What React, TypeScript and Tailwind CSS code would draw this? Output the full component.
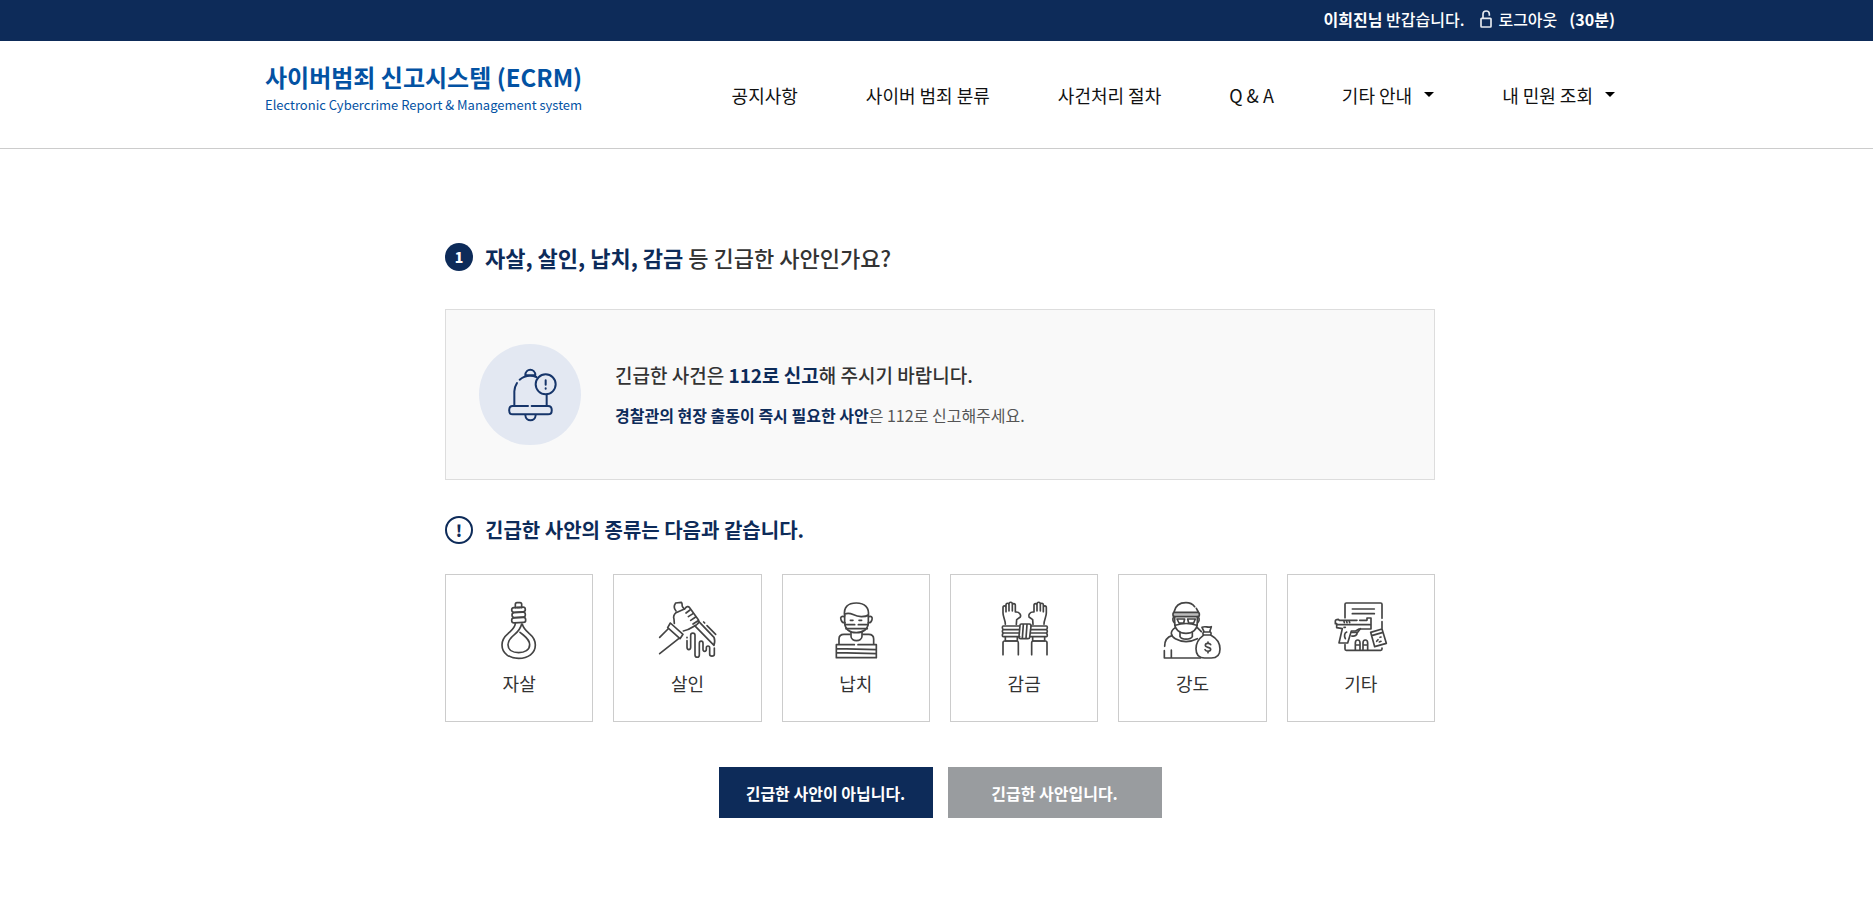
import type { ReactNode } from "react";

function LineIcon({ children }: { children: ReactNode }) {
  return (
    <svg
      viewBox="0 0 180 180"
      className="h-[60px] w-[60px]"
      fill="none"
      stroke="#444444"
      strokeWidth="5"
      strokeLinecap="round"
      strokeLinejoin="round"
      aria-hidden="true"
    >
      {children}
    </svg>
  );
}

function NooseIcon() {
  return (
    <LineIcon>
      <path d="M79 20V10q0-5 5-5h9q5 0 5 5v10" />
      <path d="M84 20h9" />
      <rect x="68" y="19" width="41" height="14" rx="7" transform="rotate(-3 88 26)" />
      <rect x="69" y="34" width="40" height="15" rx="7" transform="rotate(-3 88 41)" />
      <rect x="68" y="50" width="42" height="15" rx="7" transform="rotate(-3 88 57)" />
      <path d="M79 68c-2 14-10 19-22 30-12 10-18 20-18 34 0 25 22 40 50 40s50-15 50-40c0-14-6-24-18-34-9-8-17-14-21-28" />
      <path d="M98 69c-4 16-10 22-21 31-14 11-20 19-20 31 0 16 14 24 32 24s33-8 33-24c0-12-8-20-19-29l-10-8" />
    </LineIcon>
  );
}

function KnifeIcon() {
  return (
    <LineIcon>
      <path d="M57 30c-7-8-6-17-1-24l17-2c5 5 0 9 4 14l5 6" />
      <path d="M52 67l-1-12c-3-9-1-14 6-20l27-12c4-7 10-8 14-3l26 36c3 6 1 11-5 15-14 7-20 16-40 19" />
      <path d="M87 36l12-9M94 47l14-9M101 58l15-10M108 69l14-9" />
      <path d="M40 66l38 34-9 13-37-33z" />
      <path d="M33 84L8 109M66 112L8 158" />
      <path d="M113 74l58 59c3-10 3-17 0-24l-46-48" />
      <path d="M140 63l3 3M150 74l26 26" />
      <path d="M90 109v1M90 119v20c0 9 11 9 11 0v-36c0-9 13-9 13 0v59c0 9 13 9 13 0v-35c0-9 11-9 11 0v18c0 8 10 8 10 0v-4c0-8 10-8 10 0v19c0 7 14 7 14 0v-19" />
    </LineIcon>
  );
}

function HostageIcon() {
  return (
    <LineIcon>
      <path d="M56 44C52 18 66 6 91 6s40 14 36 40" />
      <path d="M56 39c22-9 24 9 51 8 8 0 15-1 20-5" />
      <path d="M56 42v22c0 20 14 31 35 31s36-11 36-31V44" />
      <path d="M55 47c-8-3-13 2-10 9 2 7 6 10 12 9M128 47c8-3 12 2 10 9-2 7-6 10-11 9" />
      <path d="M73 58h8M99 58h8" />
      <path d="M58 71h28M97 71h29M60 83h64" />
      <path d="M75 92v14c0 17 33 17 33 0V92" />
      <path d="M39 128v-14c0-10 7-14 15-14h18M111 100h17c9 0 15 5 15 14v14" />
      <path d="M85 131H31v39h120v-39H96M31 143l120 3M31 155l120 3" />
    </LineIcon>
  );
}

function BoundHandsIcon() {
  return (
    <LineIcon>
      <path d="M34 70c0-14-7-22-7-34V20c0-7 9-7 9 0v12-20c0-7 9-7 9 0v18V9c0-7 10-7 10 0v21V13c0-7 9-7 9 0v20l3 0c9 0 15 9 12 15l-11 8-1 14" />
      <path d="M150 70c0-14 7-22 7-34V20c0-7-9-7-9 0v12-20c0-7-9-7-9 0v18V9c0-7-10-7-10 0v21V13c0-7-9-7-9 0v20l-3 0c-9 0-15 9-12 15l11 8 1 14" />
      <path d="M76 75H28c-4 0-4 9 0 11-4 2-4 8 0 10-4 3-4 11 0 11h49M28 86h48M28 96h48" />
      <path d="M110 75h47c4 0 4 9 0 11 4 2 4 8 0 10 4 3 4 11 0 11h-47M110 86h47M110 96h47" />
      <path d="M82 69h24c4 0 6 3 5 7l-4 33c0 3-2 4-5 4H80c-4 0-6-3-5-7l3-33c0-3 1-4 4-4zM88 70l-3 42M99 70l-3 42" />
      <path d="M34 108v12h36v-12M116 108v12h36v-12" />
      <path d="M27 161v-36q0-5 5-5h37q4 0 4 5v36M113 161v-36q0-5 5-5h36q5 0 5 5v36" />
    </LineIcon>
  );
}

function RobberIcon() {
  return (
    <LineIcon>
      <path d="M36 33C40 14 53 5 72 5c11 0 20 4 26 12M103 22l6 11" />
      <rect x="33" y="34" width="79" height="13" rx="5" fill="#bdbdbd" />
      <path d="M38 47v20c0 18 14 30 34 30s34-12 34-30V47" />
      <path d="M35 48c-4 5-3 15 3 18M109 48c4 5 3 15-3 18" />
      <path d="M45 54h23l-3 12H51zM77 54h23l-5 12H80zM40 73c21-7 44-7 64 0" />
      <path d="M54 95v12c5 10 31 10 37 0V95" />
      <path d="M40 80C22 92 26 105 40 113c20 11 44 11 66 0M106 80l12 12" />
      <path d="M30 104C15 108 8 118 8 136M7 149v22h108M28 147v23" />
      <path d="M126 92l-6-13c10-5 16 2 28-2l-5 15M125 93h20c3 2 3 7 0 9h-20c-3-2-3-7 0-9z" />
      <path d="M124 103c-15 11-22 25-22 40 0 19 10 28 26 28h20c16 0 26-9 26-27 0-16-9-31-27-41" />
      <path d="M146 131c-3-6-16-5-16 2 0 8 16 4 16 12 0 7-13 8-17 1M138 123v4M138 150v5" />
    </LineIcon>
  );
}

function EvidenceIcon() {
  return (
    <LineIcon>
      <path d="M42 50V10q0-4 4-4h103q4 0 4 4v42M153 62v20M153 141v3q0 4-4 4H46q-4 0-4-4v-13" />
      <path d="M64 24h66M64 38h66" />
      <path d="M25 58h53M86 58h22v-7h12v33H84L74 90H61l-11 36H24l10-43-17-3V68h-4v-8c0-4 4-5 9-5l3 3M20 71h96" />
      <path d="M39 79h4M47 93c-7 3-8 12-4 20M39 61l1 4M47 61l1 4M55 61l1 4" />
      <path d="M62 94l18 0 8-11M62 105c10 2 16-2 17-11" />
      <path d="M73 147v-21c0-12 14-12 14 0v21M96 147v-21c0-12 14-12 14 0v21M73 132h14M96 132h14" />
      <path d="M119 94l34-10 13 43-35 10zM122 104l34-10M137 121l4-5M145 123l5-2M147 109l3-1" />
    </LineIcon>
  );
}

function BellIcon() {
  return (
    <svg
      viewBox="75 73 180 180"
      className="h-[60px] w-[60px]"
      fill="none"
      stroke="#16356a"
      strokeWidth="6"
      strokeLinecap="round"
      strokeLinejoin="round"
      aria-hidden="true"
    >
      <path d="M151 104c0-22 30-22 30 0zM118 194v-42c0-9 3-17 8-25M134 117c9-8 19-12 31-12 7 0 13 1 19 4M215 164v30" />
      <path d="M159 196h-46c-14 0-14 25 0 25h106c15 0 15-25 0-25h-49" />
      <path d="M151 223c1 21 30 21 31 0" />
      <circle cx="212" cy="131" r="30" />
      <path d="M212 119v13M212 143v1" />
    </svg>
  );
}

function LockIcon() {
  return (
    <svg
      viewBox="0 0 36 54"
      className="h-[18px] w-3"
      fill="none"
      stroke="#e6eaf0"
      strokeWidth="5"
      aria-hidden="true"
    >
      <rect x="3" y="25" width="30" height="26" rx="2" />
      <path d="M9 25V12c0-12 19-12 19 0v5" />
    </svg>
  );
}

function Caret() {
  return (
    <svg viewBox="0 0 10 5" className="h-[5px] w-[10px]" aria-hidden="true">
      <path d="M0 0h10L5 5z" fill="#000000" />
    </svg>
  );
}

const navItems = [
  { label: "공지사항" },
  { label: "사이버 범죄 분류" },
  { label: "사건처리 절차" },
  { label: "Q & A" },
  { label: "기타 안내", menu: true },
  { label: "내 민원 조회", menu: true },
];

const urgentTypes = [
  { label: "자살", icon: <NooseIcon /> },
  { label: "살인", icon: <KnifeIcon /> },
  { label: "납치", icon: <HostageIcon /> },
  { label: "감금", icon: <BoundHandsIcon /> },
  { label: "강도", icon: <RobberIcon /> },
  { label: "기타", icon: <EvidenceIcon /> },
];

export default function App() {
  return (
    <div className="min-h-screen bg-white font-['Noto_Sans_CJK_KR',sans-serif] text-[#333333]">
      <div className="bg-[#0d2b59] pl-[7px] text-white">
        <div className="mx-auto flex h-[41px] max-w-[1350px] items-center justify-end pb-1 text-base leading-6 font-medium">
          <p>
            <strong className="font-bold">이희진님</strong> 반갑습니다.
          </p>
          <a href="#logout" className="ml-4 flex items-center gap-1.5">
            <LockIcon />
            로그아웃
          </a>
          <span className="ml-3 font-bold">(30분)</span>
        </div>
      </div>

      <header className="border-b border-[#cccccc] pl-[7px]">
        <div className="mx-auto flex h-[107px] max-w-[1350px] items-center justify-between">
          <a href="#home" className="pb-3 text-[#0352a3]">
            <span className="block text-2xl leading-8 font-bold">사이버범죄 신고시스템 (ECRM)</span>
            <span className="block text-[13px] leading-6">
              Electronic Cybercrime Report &amp; Management system
            </span>
          </a>
          <nav>
            <ul className="flex gap-[68px] text-lg leading-7 text-[#111111]">
              {navItems.map((item) => (
                <li key={item.label}>
                  <a href="#menu" className="flex items-center gap-3">
                    {item.label}
                    {item.menu && <Caret />}
                  </a>
                </li>
              ))}
            </ul>
          </nav>
        </div>
      </header>

      <main className="pl-[7px]">
        <div className="mx-auto max-w-[990px] pt-[90px] pb-20">
          <h1 className="flex items-center gap-3 text-[22px] leading-9 font-medium">
            <span className="flex h-7 w-7 items-center justify-center rounded-full bg-[#0d2b59] text-sm font-black text-white">
              1
            </span>
            <span>
              <strong className="font-bold text-[#0d2b59]">자살, 살인, 납치, 감금</strong> 등 긴급한 사안인가요?
            </span>
          </h1>

          <section className="mt-[34px] flex items-center gap-[34px] border border-[#dddddd] bg-[#f9f9f9] px-[33px] py-[34px]">
            <div className="flex h-[101px] w-[102px] items-center justify-center rounded-full bg-[#e3e8f2]">
              <BellIcon />
            </div>
            <div>
              <p className="text-[19px] leading-7 font-medium">
                긴급한 사건은 <strong className="font-bold text-[#0d2b59]">112로 신고</strong>해 주시기 바랍니다.
              </p>
              <p className="mt-3 text-base leading-7 text-[#555555]">
                <strong className="font-bold text-[#0d2b59]">경찰관의 현장 출동이 즉시 필요한 사안</strong>은 112로 신고해주세요.
              </p>
            </div>
          </section>

          <h2 className="mt-8 flex items-center gap-3 text-xl leading-9 font-bold text-[#0d2b59]">
            <span className="flex h-7 w-7 items-center justify-center rounded-full border-2 border-[#0d2b59] text-base font-black">
              !
            </span>
            긴급한 사안의 종류는 다음과 같습니다.
          </h2>

          <ul className="mt-[26px] grid grid-cols-6 gap-5">
            {urgentTypes.map((type) => (
              <li
                key={type.label}
                className="flex h-[148px] flex-col items-center border border-[#cccccc] pt-[26px] text-lg leading-7"
              >
                {type.icon}
                <span className="mt-2">{type.label}</span>
              </li>
            ))}
          </ul>

          <div className="mt-[45px] flex justify-center gap-[15px] text-base font-bold text-white">
            <button type="button" className="h-[51px] w-[214px] bg-[#0d2b59]">
              긴급한 사안이 아닙니다.
            </button>
            <button type="button" className="h-[51px] w-[214px] bg-[#999c9f]">
              긴급한 사안입니다.
            </button>
          </div>
        </div>
      </main>
    </div>
  );
}
